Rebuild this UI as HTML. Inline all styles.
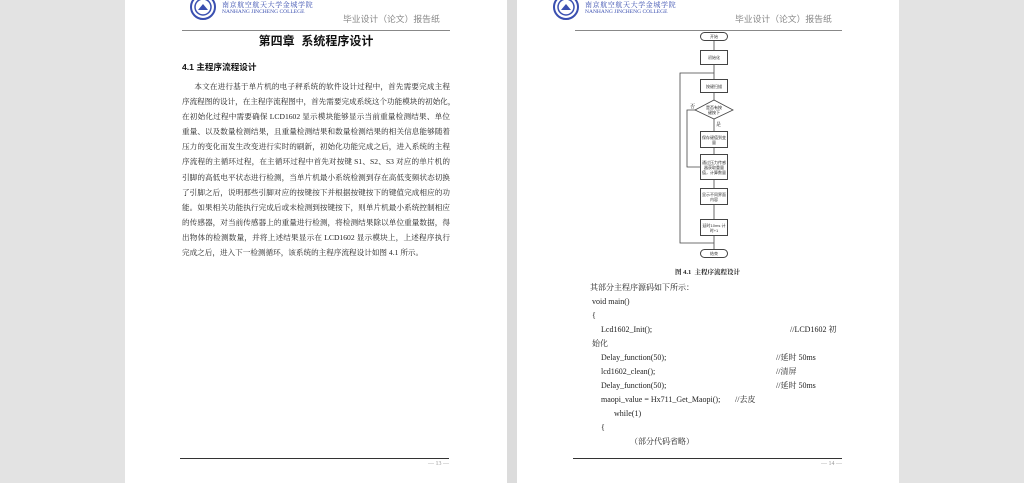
<!DOCTYPE html>
<html><head><meta charset="utf-8"><style>
*{margin:0;padding:0;box-sizing:border-box}
body{width:1024px;height:483px;background:#e3e3e3;position:relative;overflow:hidden;font-family:"Liberation Serif","Noto Serif CJK SC",serif;color:#222}
.page{position:absolute;top:0;width:382px;height:483px;background:#fff}
.a{position:absolute;white-space:nowrap}
.p{font-size:7.6px;line-height:15.1px}
.p div{white-space:nowrap;text-align:justify;text-align-last:justify;width:268px;overflow:hidden}
.p div.l{text-align-last:left}
.hd{font-family:"Liberation Sans","Noto Sans CJK SC",sans-serif;color:#888;font-size:8.8px}
.code{font-size:8px;line-height:14px}
.fb{position:absolute;border:1px solid #444;background:#fff;font-family:"Liberation Sans","Noto Sans CJK SC",sans-serif;font-size:4px;line-height:5px;text-align:center;display:flex;align-items:center;justify-content:center;color:#333;padding:0 1px}
</style></head><body>
<div class="page" style="left:125px"></div>
<div class="page" style="left:517px"></div>
<div style="position:absolute;left:507px;top:0;width:10px;height:483px;background:#dcdcdc"></div>

<svg class="a" style="left:190px;top:-6px" width="28" height="28"><circle cx="13" cy="13" r="12" fill="none" stroke="#3a4fb0" stroke-width="2"/><circle cx="13" cy="13" r="8" fill="none" stroke="#3a4fb0" stroke-width="1.5"/><path d="M8 16 L13 10 L18 16 Z" fill="#3a4fb0"/></svg>
<div class="a" style="left:222px;top:0px;font-size:7px;color:#3a4fb0;letter-spacing:0.6px">南京航空航天大学金城学院</div>
<div class="a" style="left:222px;top:9px;font-size:5.5px;color:#3a4fb0">NANHANG JINCHENG COLLEGE</div>
<div class="a hd" style="left:343px;top:12px">毕业设计（论文）报告纸</div>
<div class="a" style="left:182px;top:30px;width:268px;height:1px;background:#888"></div>
<div class="a" style="left:182px;top:32px;width:268px;text-align:center;font-family:'Liberation Sans','Noto Sans CJK SC',sans-serif;font-size:12px;font-weight:bold;color:#111">第四章&nbsp;&nbsp;系统程序设计</div>
<div class="a" style="left:182px;top:61px;font-family:'Liberation Sans','Noto Sans CJK SC',sans-serif;font-size:8.6px;font-weight:bold;color:#111">4.1 主程序流程设计</div>
<div class="a p" style="left:182px;top:79px">
<div>&nbsp;&nbsp;&nbsp;&nbsp;&nbsp;&nbsp;本文在进行基于单片机的电子秤系统的软件设计过程中，首先需要完成主程</div>
<div>序流程图的设计，在主程序流程图中，首先需要完成系统这个功能模块的初始化，</div>
<div>在初始化过程中需要确保 LCD1602 显示模块能够显示当前重量检测结果、单位</div>
<div>重量、以及数量检测结果，且重量检测结果和数量检测结果的相关信息能够随着</div>
<div>压力的变化而发生改变进行实时的刷新，初始化功能完成之后，进入系统的主程</div>
<div>序流程的主循环过程，在主循环过程中首先对按键 S1、S2、S3 对应的单片机的</div>
<div>引脚的高低电平状态进行检测，当单片机最小系统检测到存在高低变频状态切换</div>
<div>了引脚之后，说明那些引脚对应的按键按下并根据按键按下的键值完成相应的功</div>
<div>能。如果相关功能执行完成后或未检测到按键按下，则单片机最小系统控制相应</div>
<div>的传感器，对当前传感器上的重量进行检测，将检测结果除以单位重量数据，得</div>
<div>出物体的检测数量，并将上述结果显示在 LCD1602 显示模块上，上述程序执行</div>
<div class="l">完成之后，进入下一检测循环，该系统的主程序流程设计如图 4.1 所示。</div>
</div>
<div class="a" style="left:180px;top:458px;width:269px;height:1px;background:#333"></div>
<div class="a" style="left:428px;top:461px;font-size:6px;color:#999">— 13 —</div>

<svg class="a" style="left:553px;top:-6px" width="28" height="28"><circle cx="13" cy="13" r="12" fill="none" stroke="#3a4fb0" stroke-width="2"/><circle cx="13" cy="13" r="8" fill="none" stroke="#3a4fb0" stroke-width="1.5"/><path d="M8 16 L13 10 L18 16 Z" fill="#3a4fb0"/></svg>
<div class="a" style="left:585px;top:0px;font-size:7px;color:#3a4fb0;letter-spacing:0.6px">南京航空航天大学金城学院</div>
<div class="a" style="left:585px;top:9px;font-size:5.5px;color:#3a4fb0">NANHANG JINCHENG COLLEGE</div>
<div class="a hd" style="left:735px;top:12px">毕业设计（论文）报告纸</div>
<div class="a" style="left:575px;top:30px;width:267px;height:1px;background:#888"></div>

<svg class="a" style="left:670px;top:28px" width="80" height="235">
<g stroke="#444" fill="none" stroke-width="0.8">
<line x1="44" y1="12" x2="44" y2="22"/>
<line x1="44" y1="37" x2="44" y2="51"/>
<line x1="44" y1="65" x2="44" y2="72"/>
<line x1="44" y1="91" x2="44" y2="103"/>
<line x1="44" y1="120" x2="44" y2="126"/>
<line x1="44" y1="152" x2="44" y2="160"/>
<line x1="44" y1="177" x2="44" y2="191"/>
<line x1="44" y1="208" x2="44" y2="221"/>
<polyline points="44,215 10,215 10,45 44,45"/>
<polyline points="25,82 17,82 17,139 30,139"/>
<polygon points="44,72 63,82 44,91 25,82" fill="#fff"/>
</g>
</svg>
<div class="fb" style="left:700px;top:32px;width:28px;height:9px;border-radius:5px">开始</div>
<div class="fb" style="left:700px;top:50px;width:28px;height:15px">初始化</div>
<div class="fb" style="left:700px;top:79px;width:28px;height:14px">按键扫描</div>
<div class="a" style="left:706px;top:105px;font-size:4px;line-height:5px;text-align:center;width:16px;white-space:normal;font-family:'Liberation Sans','Noto Sans CJK SC',sans-serif">是否有按键按下</div>
<div class="a" style="left:690px;top:103px;font-size:5px">否</div>
<div class="a" style="left:716px;top:121px;font-size:5px">是</div>
<div class="fb" style="left:700px;top:131px;width:28px;height:17px">保存键值到变量</div>
<div class="fb" style="left:700px;top:154px;width:28px;height:26px">通过压力传感器获取重量值，计算数量</div>
<div class="fb" style="left:700px;top:188px;width:28px;height:17px">显示不同界面内容</div>
<div class="fb" style="left:700px;top:219px;width:28px;height:17px">延时10ms 计时+1</div>
<div class="fb" style="left:700px;top:249px;width:28px;height:9px;border-radius:5px">结束</div>
<div class="a" style="left:675px;top:267px;font-size:6.5px;font-weight:bold">图 4.1&nbsp; 主程序流程设计</div>

<div class="a code" style="left:590px;top:281px">其部分主程序源码如下所示：</div>
<div class="a code" style="left:592px;top:295px">void main()</div>
<div class="a code" style="left:592px;top:309px">{</div>
<div class="a code" style="left:601px;top:323px">Lcd1602_Init();</div>
<div class="a code" style="left:790px;top:323px">//LCD1602 初</div>
<div class="a code" style="left:592px;top:337px">始化</div>
<div class="a code" style="left:601px;top:351px">Delay_function(50);</div>
<div class="a code" style="left:776px;top:351px">//延时 50ms</div>
<div class="a code" style="left:601px;top:365px">lcd1602_clean();</div>
<div class="a code" style="left:776px;top:365px">//清屏</div>
<div class="a code" style="left:601px;top:379px">Delay_function(50);</div>
<div class="a code" style="left:776px;top:379px">//延时 50ms</div>
<div class="a code" style="left:601px;top:393px">maopi_value = Hx711_Get_Maopi();</div>
<div class="a code" style="left:735px;top:393px">//去皮</div>
<div class="a code" style="left:614px;top:407px">while(1)</div>
<div class="a code" style="left:601px;top:421px">{</div>
<div class="a code" style="left:630px;top:435px">（部分代码省略）</div>

<div class="a" style="left:573px;top:458px;width:269px;height:1px;background:#333"></div>
<div class="a" style="left:821px;top:461px;font-size:6px;color:#999">— 14 —</div>
</body></html>
